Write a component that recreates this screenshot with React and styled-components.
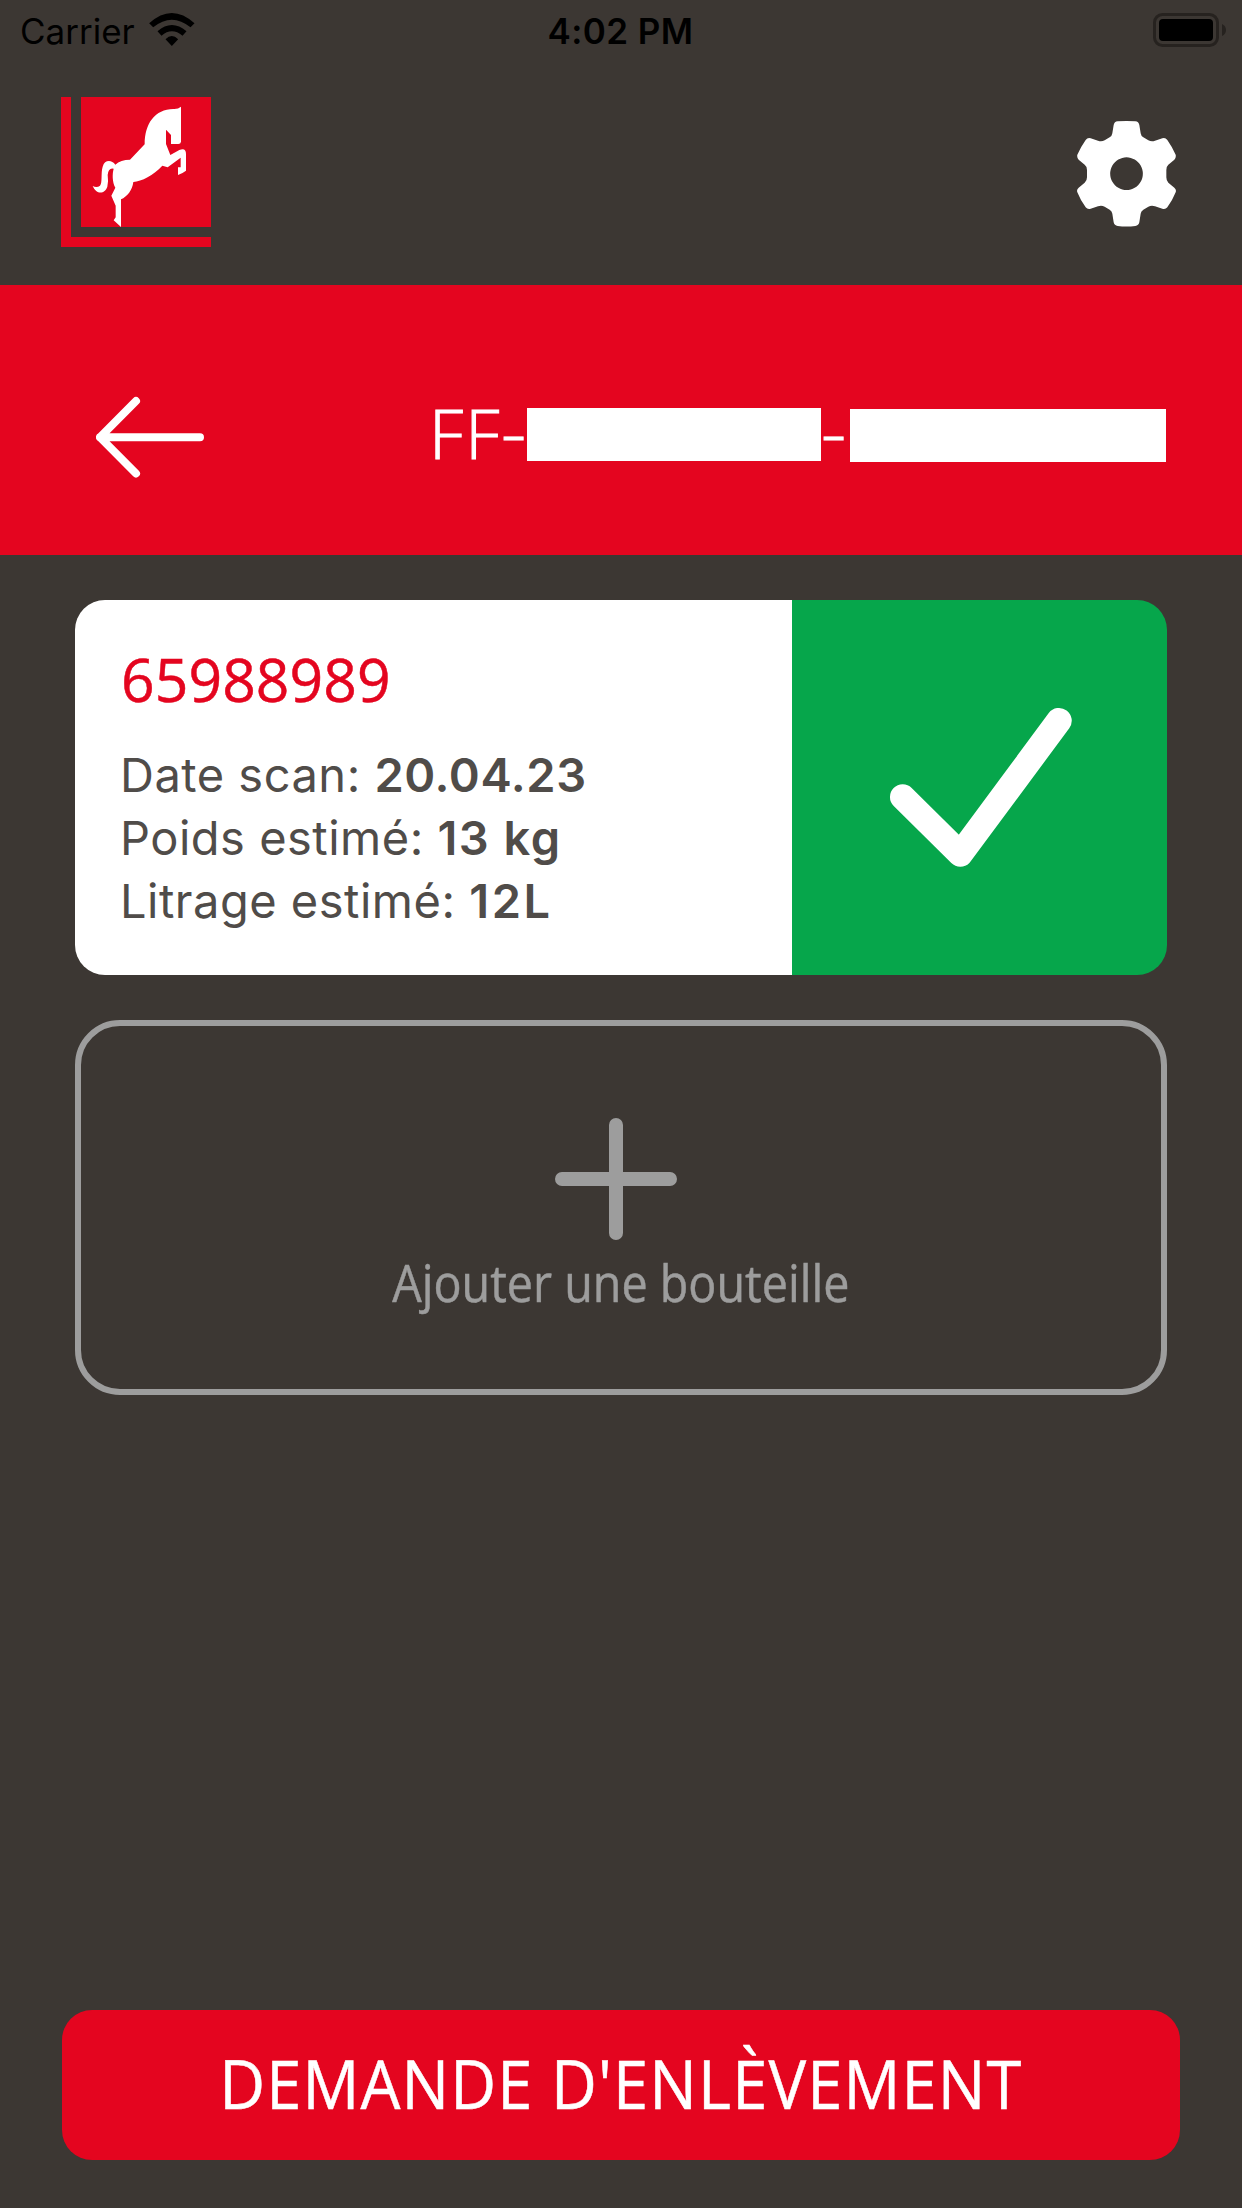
import React from 'react';
import styled, { createGlobalStyle } from 'styled-components';

const RED = '#e4051f';
const DARK = '#3c3733';
const GREY = '#9d9d9d';
const GREEN = '#06a64b';
const BRAND = '"Open Sans", "Noto Sans", sans-serif';
const SYSTEM = 'Inter, "Liberation Sans", sans-serif';

const GlobalStyle = createGlobalStyle`
  body { margin: 0; background: ${DARK}; }
  *, *::before, *::after { box-sizing: border-box; }
  button { border: 0; background: none; padding: 0; margin: 0; font: inherit; color: inherit; }
  svg { display: block; flex: none; }
`;

const Screen = styled.div`
  width: 1242px;
  height: 2208px;
  display: flex;
  flex-direction: column;
  background: ${DARK};
  overflow: hidden;
`;

const StatusBar = styled.div`
  height: 62px;
  display: grid;
  grid-template-columns: 1fr auto 1fr;
  padding: 0 15px 0 20px;
  font: 400 35px/62px ${SYSTEM};
  color: #000;
`;

const Carrier = styled.div`
  display: flex;
  gap: 14px;
  svg { margin-top: 13px; }
`;

const Clock = styled.div`
  margin: 0 6px 0 0;
  font-weight: 600;
  letter-spacing: 0.4px;
`;

const Battery = styled.div`
  display: flex;
  justify-content: flex-end;
  svg { margin-top: 13px; }
`;

const Header = styled.header`
  height: 223px;
  display: flex;
  justify-content: space-between;
  padding: 35px 66px 0 61px;
  button { height: 106px; margin-top: 24px; }
`;

const TitleBand = styled.section`
  height: 270px;
  display: flex;
  justify-content: space-between;
  align-items: flex-start;
  padding: 111px 76px 0 96px;
  background: ${RED};
`;

const Reference = styled.h1`
  display: flex;
  margin: 3px 0 0;
  font: 300 68px/68px ${BRAND};
  letter-spacing: 2px;
  color: #fff;
  -webkit-text-stroke: 1px #fff;
`;

const Part = styled.span`
  width: ${(p) => p.$width}px;
`;

const Dash = styled.span`
  display: inline-block;
  transform: translateY(-2.5px) scaleX(1.15);
  transform-origin: left;
`;

const Mask = styled.span`
  width: ${(p) => p.$width}px;
  height: 53px;
  margin-top: ${(p) => p.$top}px;
  background: #fff;
`;

const Content = styled.main`
  flex: 1;
  display: flex;
  flex-direction: column;
  gap: 45px;
  padding: 45px 75px 0;
`;

const Card = styled.article`
  height: 375px;
  display: flex;
  border-radius: 30px;
  overflow: hidden;
  background: linear-gradient(90deg, #fff 717px, ${GREEN} 717px);
`;

const Details = styled.div`
  flex: 1;
  padding: 39px 0 0 45px;
`;

const Code = styled.h2`
  margin: 0 0 24px;
  padding-left: 1px;
  font: 400 60px/80px ${BRAND};
  letter-spacing: 0.1px;
  color: ${RED};
  -webkit-text-stroke: 0.5px ${RED};
  transform: scaleX(0.98);
  transform-origin: left;
`;

const Line = styled.p`
  margin: 0;
  font: 400 47px/63px ${SYSTEM};
  letter-spacing: 0.5px;
  color: #504c49;
  white-space: pre;
  b {
    font-weight: 600;
    letter-spacing: ${(p) => p.$tracking}px;
  }
`;

const Status = styled.div`
  width: 375px;
`;

const AddBottle = styled.button`
  && {
    height: 375px;
    display: flex;
    flex-direction: column;
    align-items: center;
    padding-top: 92px;
    border: 6px solid ${GREY};
    border-radius: 45px;
    color: ${GREY};
  }
  svg { margin-right: 10px; }
`;

const AddLabel = styled.span`
  margin-top: 12px;
  font: 400 51px/60px ${BRAND};
  -webkit-text-stroke: 0.5px ${GREY};
  transform: scaleX(0.915);
`;

const Footer = styled.footer`
  display: flex;
  padding: 0 62px 48px;
`;

const Submit = styled.button`
  && {
    flex: 1;
    height: 150px;
    display: flex;
    align-items: center;
    justify-content: center;
    padding: 0 1px 5px 0;
    border-radius: 30px;
    background: ${RED};
    color: #fff;
    font: 400 68px/90px ${BRAND};
    letter-spacing: 1.2px;
    -webkit-text-stroke: 0.5px #fff;
  }
  span { transform: scaleX(0.93); white-space: nowrap; }
`;

const WifiIcon = () => (
  <svg width="46" height="33" viewBox="448 39 137 99">
    <path d="M448 70Q516 8 584 70L572 82Q516 36 460 82ZM473 94Q516 56 560 94L548 107Q516 81 485 107ZM497 118Q516 98 535 118L516 138Z" />
  </svg>
);

const BatteryIcon = () => (
  <svg width="74" height="34" viewBox="0 0 74 34">
    <rect x="1.5" y="1.5" width="63" height="31" rx="8" fill="none" stroke="#26221f" strokeWidth="3" />
    <rect x="6" y="6" width="54" height="22" rx="4" />
    <path d="M69 11Q73 13 73 17T69 23Z" fill="#26221f" />
  </svg>
);

const HorseLogo = () => (
  <svg width="150" height="150" viewBox="33 21 450 450">
    <path fill={RED} d="M33 21H63V441H483V471H33ZM93 21H483V411H93Z" />
    <path
      fill="#fff"
      d="M393 50V155Q392 162 385 162H363V135L348 119V162L361 195L388 180Q408 172 408 192V242Q396 251 384 255V232H392V203L353 232L337 227C310 256 275 274 250 276C247 300 232 320 213 328V411L191 391L197 382V347L184 317L196 293C186 275 187 250 191 236Q175 232 173 255Q176 275 172 290C165 312 140 316 128 288Q140 295 150 287C158 278 152 250 158 230C164 208 185 209 196 224Q212 209 240 209L284 163C284 100 315 58 370 57Q384 58 393 50Z"
    />
  </svg>
);

const GearIcon = () => (
  <svg width="99" height="106" viewBox="111 363 297 318">
    <path
      fill="#fff"
      fillRule="evenodd"
      d="M259.5 363L286 364Q296 365 298 375L302 400Q303 408 310 412L325 421Q335 426 345 422L367 415Q376 412 382 420Q398 443 407 464Q409 473 403 479L385 494Q379 499 379 510V532Q379 543 385 548L403 563Q410 569 407 577Q398 600 382 622Q376 629 367 626L345 619Q335 615 325 620L310 629Q303 633 302 641L298 667Q296 677 286 678Q259.5 681 233 678Q223 677 221 667L217 641Q216 633 209 629L194 620Q184 615 174 619L152 626Q143 629 137 622Q121 600 112 577Q109 569 116 563L134 548Q141 543 141 532V510Q141 499 134 494L116 479Q110 473 112 464Q121 443 137 420Q143 412 152 415L174 422Q184 426 194 421L209 412Q216 408 217 400L221 375Q223 365 233 364ZM259.5 472A49 49 0 1 0 259.6 472Z"
    />
  </svg>
);

const BackIcon = () => (
  <svg width="108" height="82" viewBox="0 0 108 82" fill="none" stroke="#fff" strokeWidth="8" strokeLinecap="round" strokeLinejoin="round">
    <path d="M104 41.3H4M40 5L4 41.3L40 77.5" />
  </svg>
);

const CheckIcon = () => (
  <svg width="375" height="375" viewBox="0 0 375 375" fill="none" stroke="#fff" strokeWidth="25.5" strokeLinecap="round" strokeLinejoin="round">
    <path d="M110.7 197L168.3 254L267 120.7" />
  </svg>
);

const PlusIcon = () => (
  <svg width="122" height="122" viewBox="0 0 122 122" fill="none" stroke={GREY} strokeWidth="14" strokeLinecap="round">
    <path d="M61 7V115M7 61H115" />
  </svg>
);

const lines = [
  { label: 'Date scan', value: '20.04.23', tracking: 0.6 },
  { label: 'Poids estimé', value: '13 kg', tracking: 1.5 },
  { label: 'Litrage estimé', value: '12L', tracking: 2.6 },
];

export default function App() {
  return (
    <>
      <GlobalStyle />
      <Screen>
        <StatusBar>
          <Carrier>Carrier<WifiIcon /></Carrier>
          <Clock>4:02 PM</Clock>
          <Battery><BatteryIcon /></Battery>
        </StatusBar>
        <Header>
          <HorseLogo />
          <button aria-label="Réglages"><GearIcon /></button>
        </Header>
        <TitleBand>
          <button aria-label="Retour"><BackIcon /></button>
          <Reference>
            <Part $width={98}>FF<Dash>-</Dash></Part>
            <Mask $width={294} $top={9} />
            <Part $width={29}><Dash>-</Dash></Part>
            <Mask $width={316} $top={10} />
          </Reference>
        </TitleBand>
        <Content>
          <Card>
            <Details>
              <Code>65988989</Code>
              {lines.map(({ label, value, tracking }) => (
                <Line key={label} $tracking={tracking}>{label}: <b>{value}</b></Line>
              ))}
            </Details>
            <Status><CheckIcon /></Status>
          </Card>
          <AddBottle>
            <PlusIcon />
            <AddLabel>Ajouter une bouteille</AddLabel>
          </AddBottle>
        </Content>
        <Footer>
          <Submit><span>DEMANDE D'ENLÈVEMENT</span></Submit>
        </Footer>
      </Screen>
    </>
  );
}
